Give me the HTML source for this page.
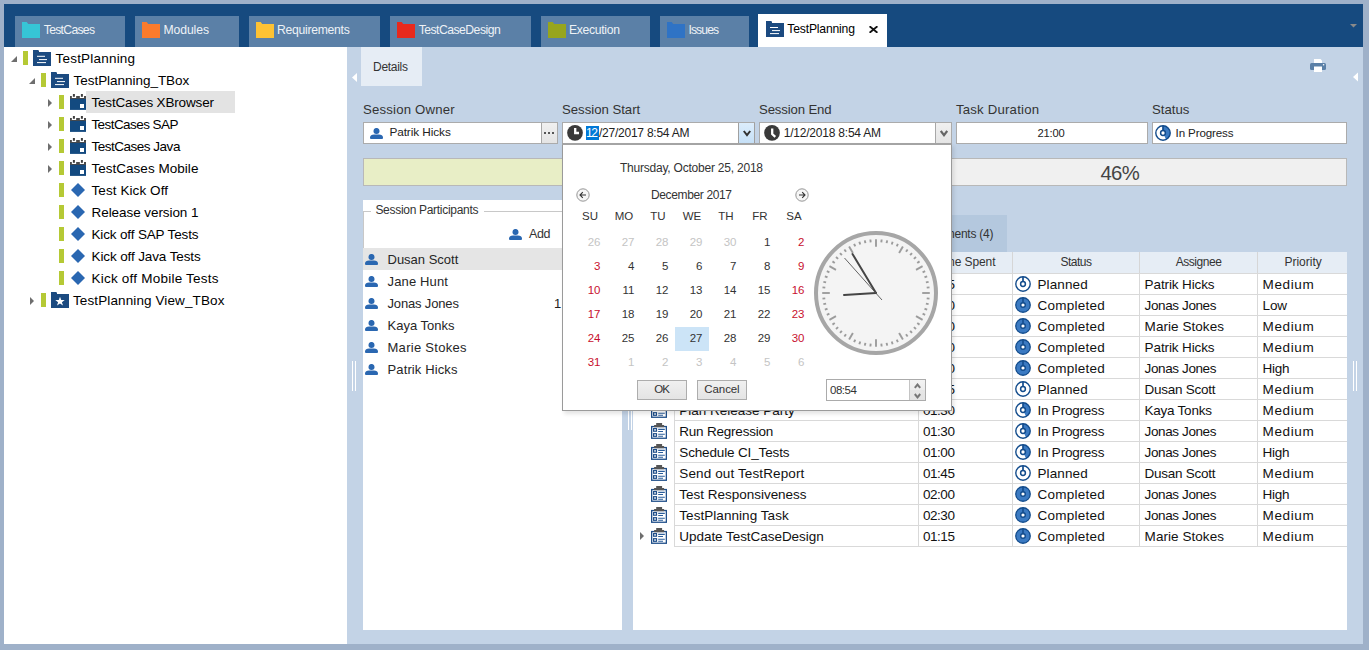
<!DOCTYPE html>
<html><head><meta charset="utf-8"><style>
*{margin:0;padding:0;box-sizing:border-box}
html,body{width:1369px;height:650px;overflow:hidden}
body{background:#9fb1c9;font-family:"Liberation Sans",sans-serif;position:relative;color:#000}
.a{position:absolute}
.t{position:absolute;white-space:pre;line-height:1}
</style></head><body>
<div class="a" style="left:4px;top:4px;width:1359px;height:43px;background:#164a7f"></div>
<div class="a" style="left:15px;top:16px;width:110px;height:31px;background:#5b80a7"></div>
<svg class="a" style="left:22px;top:22px" width="18" height="16" viewBox="0 0 18 16"><path d="M0 0H4.7L6.2 2H18V16H0Z" fill="#36c5d6"/></svg>
<div class="t" style="left:43.80px;top:24.00px;font-size:12.2px;color:#eef2f6;letter-spacing:-0.713px">TestCases</div>
<div class="a" style="left:135px;top:16px;width:104px;height:31px;background:#5b80a7"></div>
<svg class="a" style="left:142px;top:22px" width="18" height="16" viewBox="0 0 18 16"><path d="M0 0H4.7L6.2 2H18V16H0Z" fill="#fb7b2c"/></svg>
<div class="t" style="left:163.50px;top:24.00px;font-size:12.2px;color:#eef2f6;letter-spacing:-0.096px">Modules</div>
<div class="a" style="left:249px;top:16px;width:131px;height:31px;background:#5b80a7"></div>
<svg class="a" style="left:256px;top:22px" width="18" height="16" viewBox="0 0 18 16"><path d="M0 0H4.7L6.2 2H18V16H0Z" fill="#fec233"/></svg>
<div class="t" style="left:277.00px;top:24.00px;font-size:12.2px;color:#eef2f6;letter-spacing:-0.280px">Requirements</div>
<div class="a" style="left:390px;top:16px;width:141px;height:31px;background:#5b80a7"></div>
<svg class="a" style="left:397px;top:22px" width="18" height="16" viewBox="0 0 18 16"><path d="M0 0H4.7L6.2 2H18V16H0Z" fill="#e8291d"/></svg>
<div class="t" style="left:418.70px;top:24.00px;font-size:12.2px;color:#eef2f6;letter-spacing:-0.519px">TestCaseDesign</div>
<div class="a" style="left:541px;top:16px;width:109px;height:31px;background:#5b80a7"></div>
<svg class="a" style="left:548px;top:22px" width="18" height="16" viewBox="0 0 18 16"><path d="M0 0H4.7L6.2 2H18V16H0Z" fill="#97a51d"/></svg>
<div class="t" style="left:569.00px;top:24.00px;font-size:12.2px;color:#eef2f6;letter-spacing:-0.316px">Execution</div>
<div class="a" style="left:660px;top:16px;width:89px;height:31px;background:#5b80a7"></div>
<svg class="a" style="left:667px;top:22px" width="18" height="16" viewBox="0 0 18 16"><path d="M0 0H4.7L6.2 2H18V16H0Z" fill="#2f73c5"/></svg>
<div class="t" style="left:688.40px;top:24.00px;font-size:12.2px;color:#eef2f6;letter-spacing:-0.887px">Issues</div>
<div class="a" style="left:758px;top:14px;width:129px;height:33px;background:#fff"></div>
<svg class="a" style="left:766px;top:21px" width="18" height="16" viewBox="0 0 18 16"><path d="M0 0H5.3L6 1V2H18V16H0Z" fill="#1b4a80"/><path d="M4 6.5H12M6 9.6H14M4 12.6H13" stroke="#fff" stroke-width="1"/></svg>
<div class="t" style="left:787.30px;top:23.00px;font-size:12.2px;color:#000;letter-spacing:-0.191px">TestPlanning</div>
<svg class="a" style="left:869px;top:26px" width="9" height="7" viewBox="0 0 9 7"><path d="M0.6 0.2L8.4 6.8M8.4 0.2L0.6 6.8" stroke="#111" stroke-width="1.8"/></svg>
<svg class="a" style="left:1350px;top:23.5px" width="7" height="4" viewBox="0 0 7 4"><path d="M0 0H7L3.5 3.6Z" fill="#8a8a8a"/></svg>
<div class="a" style="left:4px;top:47px;width:343px;height:597px;background:#fff"></div>
<svg class="a" style="left:11px;top:56px" width="6" height="6" viewBox="0 0 6 6"><path d="M6 0V6H0Z" fill="#6e6e6e"/></svg>
<div class="a" style="left:23px;top:51px;width:5px;height:14px;background:#b5c935"></div>
<svg class="a" style="left:33px;top:50px" width="18" height="16" viewBox="0 0 18 16"><path d="M0 0H5.3L6 1V2H18V16H0Z" fill="#1b4a80"/><path d="M4 6.3H12M6 9.6H14M4 12.6H13" stroke="#fff" stroke-width="1"/></svg>
<div class="t" style="left:55.50px;top:51.80px;font-size:13.5px;color:#000;letter-spacing:0.208px">TestPlanning</div>
<svg class="a" style="left:29px;top:78px" width="6" height="6" viewBox="0 0 6 6"><path d="M6 0V6H0Z" fill="#6e6e6e"/></svg>
<div class="a" style="left:41px;top:73px;width:5px;height:14px;background:#b5c935"></div>
<svg class="a" style="left:51px;top:72px" width="18" height="16" viewBox="0 0 18 16"><path d="M0 0H5.3L6 1V2H18V16H0Z" fill="#1b4a80"/><path d="M4 6.3H12M6 9.6H14M4 12.6H13" stroke="#fff" stroke-width="1"/></svg>
<div class="t" style="left:73.50px;top:73.80px;font-size:13.5px;color:#000;letter-spacing:-0.033px">TestPlanning_TBox</div>
<div class="a" style="left:86px;top:91px;width:149px;height:22px;background:#e3e3e3"></div>
<svg class="a" style="left:48px;top:99px" width="4" height="8" viewBox="0 0 4 8"><path d="M0 0L4 4L0 8Z" fill="#6e6e6e"/></svg>
<div class="a" style="left:59px;top:95px;width:5px;height:14px;background:#b5c935"></div>
<svg class="a" style="left:70px;top:94px" width="16" height="16" viewBox="0 0 16 16"><path d="M0 2H1.85V4H6.15V2H9.85V4H14V2H16V4.9H0Z" fill="#4a4a4a"/><rect x="2.9" y="0" width="2" height="2.8" fill="#3f3f3f"/><rect x="10.9" y="0" width="2" height="2.8" fill="#3f3f3f"/><rect x="0" y="4.9" width="16" height="11" fill="#134a80"/><rect x="10" y="10" width="4" height="4" fill="#fff"/></svg>
<div class="t" style="left:91.40px;top:95.80px;font-size:13.5px;color:#000;letter-spacing:-0.159px">TestCases XBrowser</div>
<svg class="a" style="left:48px;top:121px" width="4" height="8" viewBox="0 0 4 8"><path d="M0 0L4 4L0 8Z" fill="#6e6e6e"/></svg>
<div class="a" style="left:59px;top:117px;width:5px;height:14px;background:#b5c935"></div>
<svg class="a" style="left:70px;top:116px" width="16" height="16" viewBox="0 0 16 16"><path d="M0 2H1.85V4H6.15V2H9.85V4H14V2H16V4.9H0Z" fill="#4a4a4a"/><rect x="2.9" y="0" width="2" height="2.8" fill="#3f3f3f"/><rect x="10.9" y="0" width="2" height="2.8" fill="#3f3f3f"/><rect x="0" y="4.9" width="16" height="11" fill="#134a80"/><rect x="10" y="10" width="4" height="4" fill="#fff"/></svg>
<div class="t" style="left:91.40px;top:117.80px;font-size:13.5px;color:#000;letter-spacing:-0.566px">TestCases SAP</div>
<svg class="a" style="left:48px;top:143px" width="4" height="8" viewBox="0 0 4 8"><path d="M0 0L4 4L0 8Z" fill="#6e6e6e"/></svg>
<div class="a" style="left:59px;top:139px;width:5px;height:14px;background:#b5c935"></div>
<svg class="a" style="left:70px;top:138px" width="16" height="16" viewBox="0 0 16 16"><path d="M0 2H1.85V4H6.15V2H9.85V4H14V2H16V4.9H0Z" fill="#4a4a4a"/><rect x="2.9" y="0" width="2" height="2.8" fill="#3f3f3f"/><rect x="10.9" y="0" width="2" height="2.8" fill="#3f3f3f"/><rect x="0" y="4.9" width="16" height="11" fill="#134a80"/><rect x="10" y="10" width="4" height="4" fill="#fff"/></svg>
<div class="t" style="left:91.40px;top:139.80px;font-size:13.5px;color:#000;letter-spacing:-0.484px">TestCases Java</div>
<svg class="a" style="left:48px;top:165px" width="4" height="8" viewBox="0 0 4 8"><path d="M0 0L4 4L0 8Z" fill="#6e6e6e"/></svg>
<div class="a" style="left:59px;top:161px;width:5px;height:14px;background:#b5c935"></div>
<svg class="a" style="left:70px;top:160px" width="16" height="16" viewBox="0 0 16 16"><path d="M0 2H1.85V4H6.15V2H9.85V4H14V2H16V4.9H0Z" fill="#4a4a4a"/><rect x="2.9" y="0" width="2" height="2.8" fill="#3f3f3f"/><rect x="10.9" y="0" width="2" height="2.8" fill="#3f3f3f"/><rect x="0" y="4.9" width="16" height="11" fill="#134a80"/><rect x="10" y="10" width="4" height="4" fill="#fff"/></svg>
<div class="t" style="left:91.40px;top:161.80px;font-size:13.5px;color:#000;letter-spacing:0.030px">TestCases Mobile</div>
<div class="a" style="left:59px;top:183px;width:5px;height:14px;background:#b5c935"></div>
<svg class="a" style="left:71px;top:183px" width="14" height="14" viewBox="0 0 14 14"><path d="M7 0L14 7L7 14L0 7Z" fill="#2a67b1"/></svg>
<div class="t" style="left:91.50px;top:183.80px;font-size:13.5px;color:#000;letter-spacing:0.081px">Test Kick Off</div>
<div class="a" style="left:59px;top:205px;width:5px;height:14px;background:#b5c935"></div>
<svg class="a" style="left:71px;top:205px" width="14" height="14" viewBox="0 0 14 14"><path d="M7 0L14 7L7 14L0 7Z" fill="#2a67b1"/></svg>
<div class="t" style="left:91.50px;top:205.80px;font-size:13.5px;color:#000;letter-spacing:-0.066px">Release version 1</div>
<div class="a" style="left:59px;top:227px;width:5px;height:14px;background:#b5c935"></div>
<svg class="a" style="left:71px;top:227px" width="14" height="14" viewBox="0 0 14 14"><path d="M7 0L14 7L7 14L0 7Z" fill="#2a67b1"/></svg>
<div class="t" style="left:91.50px;top:227.80px;font-size:13.5px;color:#000;letter-spacing:-0.151px">Kick off SAP Tests</div>
<div class="a" style="left:59px;top:249px;width:5px;height:14px;background:#b5c935"></div>
<svg class="a" style="left:71px;top:249px" width="14" height="14" viewBox="0 0 14 14"><path d="M7 0L14 7L7 14L0 7Z" fill="#2a67b1"/></svg>
<div class="t" style="left:91.50px;top:249.80px;font-size:13.5px;color:#000;letter-spacing:-0.117px">Kick off Java Tests</div>
<div class="a" style="left:59px;top:271px;width:5px;height:14px;background:#b5c935"></div>
<svg class="a" style="left:71px;top:271px" width="14" height="14" viewBox="0 0 14 14"><path d="M7 0L14 7L7 14L0 7Z" fill="#2a67b1"/></svg>
<div class="t" style="left:91.50px;top:271.80px;font-size:13.5px;color:#000;letter-spacing:0.222px">Kick off Mobile Tests</div>
<svg class="a" style="left:30px;top:297px" width="4" height="8" viewBox="0 0 4 8"><path d="M0 0L4 4L0 8Z" fill="#6e6e6e"/></svg>
<div class="a" style="left:41px;top:293px;width:5px;height:14px;background:#b5c935"></div>
<svg class="a" style="left:51px;top:292px" width="18" height="16" viewBox="0 0 18 16"><path d="M0 0H5.3L6 1V2H18V16H0Z" fill="#1b4a80"/><path d="M9 5.2L10.1 8.2H13.2L10.7 10.1L11.7 13.1L9 11.3L6.3 13.1L7.3 10.1L4.8 8.2H7.9Z" fill="#fff" transform="translate(9 9.3) scale(1.12) translate(-9 -9.3)"/></svg>
<div class="t" style="left:73.00px;top:293.80px;font-size:13.5px;color:#000;letter-spacing:0.110px">TestPlanning View_TBox</div>
<div class="a" style="left:347px;top:47px;width:1016px;height:597px;background:#c3d3e6"></div>
<div class="a" style="left:361px;top:47px;width:61px;height:39px;background:#e6edf5"></div>
<div class="t" style="left:373.00px;top:61.30px;font-size:12px;color:#333;letter-spacing:-0.281px">Details</div>
<svg class="a" style="left:352px;top:73px" width="5" height="9" viewBox="0 0 5 9"><path d="M5 0V9L0 4.5Z" fill="#fff"/></svg>
<svg class="a" style="left:1310px;top:59px" width="16" height="13" viewBox="0 0 16 13"><path d="M4 0H10.5L12 1.5V4.5H4Z" fill="#fff"/><rect x="0" y="4" width="16" height="7" rx="1.5" fill="#5b80a7"/><rect x="4" y="7.5" width="8" height="5.5" fill="#fff"/><circle cx="13.6" cy="5.8" r="0.8" fill="#fff"/></svg>
<svg class="a" style="left:1353px;top:72px" width="5" height="10" viewBox="0 0 5 9"><path d="M5 0V9L0 4.5Z" fill="#fff"/></svg>
<div class="t" style="left:363.00px;top:103.30px;font-size:13.2px;color:#333;letter-spacing:0.182px">Session Owner</div>
<div class="t" style="left:562.00px;top:103.30px;font-size:13.2px;color:#333;letter-spacing:-0.020px">Session Start</div>
<div class="t" style="left:759.00px;top:103.30px;font-size:13.2px;color:#333;letter-spacing:-0.145px">Session End</div>
<div class="t" style="left:956.00px;top:103.30px;font-size:13.2px;color:#333;letter-spacing:0.198px">Task Duration</div>
<div class="t" style="left:1152.00px;top:103.30px;font-size:13.2px;color:#333;letter-spacing:-0.018px">Status</div>
<div class="a" style="left:363px;top:122px;width:195px;height:22px;background:#fff;border:1px solid #ababab"></div>
<svg class="a" style="left:370px;top:127.5px" width="13" height="11" viewBox="0 0 13 11"><circle cx="6.5" cy="3" r="3.05" fill="#2a67b1"/><path d="M0 9.6C0 7.6 1.8 6.6 4 6.6H9C11.2 6.6 13 7.6 13 9.6V10Q13 11 12 11H1Q0 11 0 10Z" fill="#2a67b1"/></svg>
<div class="t" style="left:389.40px;top:127.10px;font-size:11.8px;color:#222;letter-spacing:-0.080px">Patrik Hicks</div>
<div class="a" style="left:541px;top:123px;width:16px;height:20px;background:linear-gradient(#f0f0f0,#e4e4e4);border-left:1px solid #a8a8a8"></div>
<svg class="a" style="left:543px;top:132px" width="12" height="2" viewBox="0 0 12 2"><rect x="1" y="0" width="2" height="2" fill="#555"/><rect x="5" y="0" width="2" height="2" fill="#555"/><rect x="9" y="0" width="2" height="2" fill="#555"/></svg>
<div class="a" style="left:562px;top:122px;width:193px;height:22px;background:#fff;border:1px solid #ababab"></div>
<svg class="a" style="left:567px;top:125px" width="16" height="16" viewBox="0 0 16 16"><circle cx="8" cy="7.85" r="7.85" fill="#3a3a3a"/><path d="M8.2 3.1V8H12" stroke="#fff" stroke-width="2.3" fill="none"/></svg>
<div class="a" style="left:586px;top:126px;width:13px;height:14px;background:#0078d7"></div>
<div class="t" style="left:586.00px;top:127.00px;font-size:12px;color:#fff;letter-spacing:-1.359px">12</div>
<div class="t" style="left:599.00px;top:127.00px;font-size:12px;color:#222;letter-spacing:-0.239px">/27/2017 8:54 AM</div>
<div class="a" style="left:738px;top:123px;width:17px;height:20px;background:linear-gradient(#dcedfc,#c6e0f7);border-left:1px solid #a0a0a0;border-right:1px solid #a0a0a0"></div>
<svg class="a" style="left:742.5px;top:129.5px" width="8" height="7" viewBox="0 0 8 7"><path d="M0.8 1L4 5.2L7.2 1" stroke="#333" stroke-width="2" fill="none"/></svg>
<div class="a" style="left:759px;top:122px;width:193px;height:22px;background:#fff;border:1px solid #ababab"></div>
<svg class="a" style="left:764px;top:125px" width="16" height="16" viewBox="0 0 16 16"><circle cx="8" cy="7.85" r="7.85" fill="#3a3a3a"/><path d="M8.2 3.4V9L11.3 11.8" stroke="#fff" stroke-width="2.3" fill="none"/></svg>
<div class="t" style="left:783.70px;top:127.00px;font-size:12px;color:#222;letter-spacing:-0.209px">1/12/2018 8:54 AM</div>
<div class="a" style="left:935px;top:123px;width:16px;height:20px;background:linear-gradient(#f0f0f0,#e5e5e5);border-left:1px solid #a8a8a8"></div>
<svg class="a" style="left:939.5px;top:129.5px" width="8" height="7" viewBox="0 0 8 7"><path d="M0.8 1L4 5.2L7.2 1" stroke="#666" stroke-width="2.2" fill="none"/></svg>
<div class="a" style="left:956px;top:122px;width:192px;height:22px;background:#fff;border:1px solid #ababab"></div>
<div class="t" style="left:1037.50px;top:128.00px;font-size:11.2px;color:#222;letter-spacing:-0.175px">21:00</div>
<div class="a" style="left:1152px;top:122px;width:195px;height:22px;background:#fff;border:1px solid #ababab"></div>
<svg class="a" style="left:1155px;top:125px" width="16" height="16" viewBox="0 0 16 16"><circle cx="8" cy="8" r="7.2" fill="#fff"/><path d="M8 8V0.8A7.2 7.2 0 0 1 11.04 14.53Z" fill="#3b7ac2"/><circle cx="8" cy="8" r="7.2" fill="none" stroke="#134c8c" stroke-width="1.4"/><circle cx="8" cy="8" r="2.4" fill="#fff" stroke="#134c8c" stroke-width="1.5"/><path d="M8 0.8V5.6" stroke="#134c8c" stroke-width="1.7"/></svg>
<div class="t" style="left:1175.60px;top:127.00px;font-size:11.6px;color:#222;letter-spacing:-0.130px">In Progress</div>
<div class="a" style="left:363px;top:158px;width:984px;height:28px;background:#f0f0f0;border:1px solid #b8b8b8"></div>
<div class="a" style="left:364px;top:159px;width:452px;height:26px;background:#e8eec6"></div>
<div class="t" style="left:1100.40px;top:163.00px;font-size:20.3px;color:#444;letter-spacing:-0.547px">46%</div>
<div class="a" style="left:363px;top:200px;width:259px;height:430px;background:#fff"></div>
<div class="a" style="left:363px;top:211px;width:8px;height:1px;background:#c8c8c8"></div>
<div class="a" style="left:363px;top:211px;width:1px;height:37px;background:#c8c8c8"></div>
<div class="a" style="left:484px;top:211px;width:138px;height:1px;background:#c8c8c8"></div>
<div class="t" style="left:375.40px;top:204.20px;font-size:12px;color:#333;letter-spacing:-0.297px">Session Participants</div>
<svg class="a" style="left:509px;top:228.5px" width="13" height="11" viewBox="0 0 13 11"><circle cx="6.5" cy="3" r="3.05" fill="#2a67b1"/><path d="M0 9.6C0 7.6 1.8 6.6 4 6.6H9C11.2 6.6 13 7.6 13 9.6V10Q13 11 12 11H1Q0 11 0 10Z" fill="#2a67b1"/></svg>
<div class="t" style="left:529.00px;top:228.00px;font-size:12.5px;color:#333;letter-spacing:-0.375px">Add</div>
<div class="a" style="left:363px;top:248px;width:259px;height:22px;background:#e5e5e5"></div>
<svg class="a" style="left:365px;top:253.5px" width="13" height="11" viewBox="0 0 13 11"><circle cx="6.5" cy="3" r="3.05" fill="#2a67b1"/><path d="M0 9.6C0 7.6 1.8 6.6 4 6.6H9C11.2 6.6 13 7.6 13 9.6V10Q13 11 12 11H1Q0 11 0 10Z" fill="#2a67b1"/></svg>
<div class="t" style="left:387.50px;top:252.60px;font-size:13px;color:#262626">Dusan Scott</div>
<svg class="a" style="left:365px;top:275.5px" width="13" height="11" viewBox="0 0 13 11"><circle cx="6.5" cy="3" r="3.05" fill="#2a67b1"/><path d="M0 9.6C0 7.6 1.8 6.6 4 6.6H9C11.2 6.6 13 7.6 13 9.6V10Q13 11 12 11H1Q0 11 0 10Z" fill="#2a67b1"/></svg>
<div class="t" style="left:387.50px;top:274.60px;font-size:13px;color:#262626;letter-spacing:0.142px">Jane Hunt</div>
<svg class="a" style="left:365px;top:297.5px" width="13" height="11" viewBox="0 0 13 11"><circle cx="6.5" cy="3" r="3.05" fill="#2a67b1"/><path d="M0 9.6C0 7.6 1.8 6.6 4 6.6H9C11.2 6.6 13 7.6 13 9.6V10Q13 11 12 11H1Q0 11 0 10Z" fill="#2a67b1"/></svg>
<div class="t" style="left:387.50px;top:296.60px;font-size:13px;color:#262626;letter-spacing:-0.160px">Jonas Jones</div>
<svg class="a" style="left:365px;top:319.5px" width="13" height="11" viewBox="0 0 13 11"><circle cx="6.5" cy="3" r="3.05" fill="#2a67b1"/><path d="M0 9.6C0 7.6 1.8 6.6 4 6.6H9C11.2 6.6 13 7.6 13 9.6V10Q13 11 12 11H1Q0 11 0 10Z" fill="#2a67b1"/></svg>
<div class="t" style="left:387.50px;top:318.60px;font-size:13px;color:#262626">Kaya Tonks</div>
<svg class="a" style="left:365px;top:341.5px" width="13" height="11" viewBox="0 0 13 11"><circle cx="6.5" cy="3" r="3.05" fill="#2a67b1"/><path d="M0 9.6C0 7.6 1.8 6.6 4 6.6H9C11.2 6.6 13 7.6 13 9.6V10Q13 11 12 11H1Q0 11 0 10Z" fill="#2a67b1"/></svg>
<div class="t" style="left:387.50px;top:340.60px;font-size:13px;color:#262626;letter-spacing:0.284px">Marie Stokes</div>
<svg class="a" style="left:365px;top:363.5px" width="13" height="11" viewBox="0 0 13 11"><circle cx="6.5" cy="3" r="3.05" fill="#2a67b1"/><path d="M0 9.6C0 7.6 1.8 6.6 4 6.6H9C11.2 6.6 13 7.6 13 9.6V10Q13 11 12 11H1Q0 11 0 10Z" fill="#2a67b1"/></svg>
<div class="t" style="left:387.50px;top:362.60px;font-size:13px;color:#262626;letter-spacing:0.125px">Patrik Hicks</div>
<div class="t" style="left:554.00px;top:297.00px;font-size:13px;color:#222">1</div>
<div class="a" style="left:352px;top:361px;width:1px;height:30px;background:#fff"></div>
<div class="a" style="left:355px;top:361px;width:1px;height:30px;background:#fff"></div>
<div class="a" style="left:628px;top:400px;width:1px;height:30px;background:#fff"></div>
<div class="a" style="left:631px;top:400px;width:1px;height:30px;background:#fff"></div>
<div class="a" style="left:1353px;top:361px;width:1px;height:30px;background:#fff"></div>
<div class="a" style="left:1356px;top:361px;width:1px;height:30px;background:#fff"></div>
<div class="a" style="left:900px;top:215px;width:107px;height:37px;background:#b4c8de"></div>
<div class="t" style="left:912.40px;top:227.90px;font-size:12px;color:#333;letter-spacing:-0.265px">Attachments (4)</div>
<div class="a" style="left:633px;top:252px;width:714px;height:378px;background:#fff"></div>
<div class="a" style="left:633px;top:252px;width:714px;height:22px;background:#e6edf5;border-bottom:1px solid #d4d4d4"></div>
<div class="a" style="left:674px;top:252px;width:1px;height:21px;background:#d6d6d6"></div>
<div class="a" style="left:918px;top:252px;width:1px;height:21px;background:#d6d6d6"></div>
<div class="a" style="left:1012px;top:252px;width:1px;height:21px;background:#d6d6d6"></div>
<div class="a" style="left:1139px;top:252px;width:1px;height:21px;background:#d6d6d6"></div>
<div class="a" style="left:1257px;top:252px;width:1px;height:21px;background:#d6d6d6"></div>
<div class="t" style="left:935.50px;top:256.10px;font-size:12px;color:#333;letter-spacing:-0.102px">Time Spent</div>
<div class="t" style="left:1060.40px;top:256.10px;font-size:12px;color:#333;letter-spacing:-0.486px">Status</div>
<div class="t" style="left:1175.70px;top:256.10px;font-size:12px;color:#333;letter-spacing:-0.454px">Assignee</div>
<div class="t" style="left:1284.50px;top:256.10px;font-size:12px;color:#333;letter-spacing:-0.021px">Priority</div>
<div class="a" style="left:674px;top:273px;width:673px;height:22px;border:1px solid #d9d9d9;border-right:none"></div>
<div class="a" style="left:918px;top:273px;width:1px;height:22px;background:#d9d9d9"></div>
<div class="a" style="left:1012px;top:273px;width:1px;height:22px;background:#d9d9d9"></div>
<div class="a" style="left:1139px;top:273px;width:1px;height:22px;background:#d9d9d9"></div>
<div class="a" style="left:1257px;top:273px;width:1px;height:22px;background:#d9d9d9"></div>
<svg class="a" style="left:651px;top:276px" width="16" height="16" viewBox="0 0 16 16"><rect x="0.65" y="3.55" width="14.7" height="11.7" fill="#fff" stroke="#1f4e89" stroke-width="1.3"/><rect x="5.2" y="0" width="5.9" height="2.2" fill="#555"/><rect x="3.1" y="2" width="10" height="2.2" fill="#555"/><rect x="2.6" y="5.6" width="2.9" height="2.6" fill="none" stroke="#1f4e89" stroke-width="1.2"/><rect x="2.6" y="10.7" width="2.9" height="2.6" fill="none" stroke="#1f4e89" stroke-width="1.2"/><path d="M7.2 6.4H13.8M7.2 8.5H12M7.2 11.2H13.8M7.2 13.3H12" stroke="#2a5d9a" stroke-width="1.1"/></svg>
<div class="t" style="left:679.30px;top:278.00px;font-size:13.5px;color:#111">Define Test Scope</div>
<div class="t" style="left:923.00px;top:278.00px;font-size:13.5px;color:#111;letter-spacing:-0.474px">01:15</div>
<svg class="a" style="left:1015px;top:276px" width="16" height="16" viewBox="0 0 16 16"><circle cx="8" cy="8" r="7.2" fill="#fff" stroke="#134c8c" stroke-width="1.4"/><circle cx="8" cy="8" r="2.4" fill="#fff" stroke="#134c8c" stroke-width="1.5"/><path d="M8 0.8V5.6" stroke="#134c8c" stroke-width="1.7"/></svg>
<div class="t" style="left:1037.50px;top:278.00px;font-size:13.5px;color:#111;letter-spacing:0.109px">Planned</div>
<div class="t" style="left:1144.60px;top:278.00px;font-size:13.5px;color:#111;letter-spacing:-0.115px">Patrik Hicks</div>
<div class="t" style="left:1262.60px;top:278.00px;font-size:13.5px;color:#111;letter-spacing:0.617px">Medium</div>
<div class="a" style="left:674px;top:294px;width:673px;height:22px;border:1px solid #d9d9d9;border-right:none"></div>
<div class="a" style="left:918px;top:294px;width:1px;height:22px;background:#d9d9d9"></div>
<div class="a" style="left:1012px;top:294px;width:1px;height:22px;background:#d9d9d9"></div>
<div class="a" style="left:1139px;top:294px;width:1px;height:22px;background:#d9d9d9"></div>
<div class="a" style="left:1257px;top:294px;width:1px;height:22px;background:#d9d9d9"></div>
<svg class="a" style="left:651px;top:297px" width="16" height="16" viewBox="0 0 16 16"><rect x="0.65" y="3.55" width="14.7" height="11.7" fill="#fff" stroke="#1f4e89" stroke-width="1.3"/><rect x="5.2" y="0" width="5.9" height="2.2" fill="#555"/><rect x="3.1" y="2" width="10" height="2.2" fill="#555"/><rect x="2.6" y="5.6" width="2.9" height="2.6" fill="none" stroke="#1f4e89" stroke-width="1.2"/><rect x="2.6" y="10.7" width="2.9" height="2.6" fill="none" stroke="#1f4e89" stroke-width="1.2"/><path d="M7.2 6.4H13.8M7.2 8.5H12M7.2 11.2H13.8M7.2 13.3H12" stroke="#2a5d9a" stroke-width="1.1"/></svg>
<div class="t" style="left:679.30px;top:299.00px;font-size:13.5px;color:#111">Create Test Plan</div>
<div class="t" style="left:923.00px;top:299.00px;font-size:13.5px;color:#111;letter-spacing:-0.474px">02:00</div>
<svg class="a" style="left:1015px;top:297px" width="16" height="16" viewBox="0 0 16 16"><circle cx="8" cy="8" r="7.25" fill="#3b7ac2" stroke="#134c8c" stroke-width="1.3"/><circle cx="8" cy="8" r="2.3" fill="#fff" stroke="#134c8c" stroke-width="1.4"/><path d="M8 0.8V5.7" stroke="#134c8c" stroke-width="1.6"/></svg>
<div class="t" style="left:1037.50px;top:299.00px;font-size:13.5px;color:#111;letter-spacing:0.250px">Completed</div>
<div class="t" style="left:1144.60px;top:299.00px;font-size:13.5px;color:#111;letter-spacing:-0.391px">Jonas Jones</div>
<div class="t" style="left:1262.60px;top:299.00px;font-size:13.5px;color:#111;letter-spacing:-0.133px">Low</div>
<div class="a" style="left:674px;top:315px;width:673px;height:22px;border:1px solid #d9d9d9;border-right:none"></div>
<div class="a" style="left:918px;top:315px;width:1px;height:22px;background:#d9d9d9"></div>
<div class="a" style="left:1012px;top:315px;width:1px;height:22px;background:#d9d9d9"></div>
<div class="a" style="left:1139px;top:315px;width:1px;height:22px;background:#d9d9d9"></div>
<div class="a" style="left:1257px;top:315px;width:1px;height:22px;background:#d9d9d9"></div>
<svg class="a" style="left:651px;top:318px" width="16" height="16" viewBox="0 0 16 16"><rect x="0.65" y="3.55" width="14.7" height="11.7" fill="#fff" stroke="#1f4e89" stroke-width="1.3"/><rect x="5.2" y="0" width="5.9" height="2.2" fill="#555"/><rect x="3.1" y="2" width="10" height="2.2" fill="#555"/><rect x="2.6" y="5.6" width="2.9" height="2.6" fill="none" stroke="#1f4e89" stroke-width="1.2"/><rect x="2.6" y="10.7" width="2.9" height="2.6" fill="none" stroke="#1f4e89" stroke-width="1.2"/><path d="M7.2 6.4H13.8M7.2 8.5H12M7.2 11.2H13.8M7.2 13.3H12" stroke="#2a5d9a" stroke-width="1.1"/></svg>
<div class="t" style="left:679.30px;top:320.00px;font-size:13.5px;color:#111">Review Requirements</div>
<div class="t" style="left:923.00px;top:320.00px;font-size:13.5px;color:#111;letter-spacing:-0.474px">01:00</div>
<svg class="a" style="left:1015px;top:318px" width="16" height="16" viewBox="0 0 16 16"><circle cx="8" cy="8" r="7.25" fill="#3b7ac2" stroke="#134c8c" stroke-width="1.3"/><circle cx="8" cy="8" r="2.3" fill="#fff" stroke="#134c8c" stroke-width="1.4"/><path d="M8 0.8V5.7" stroke="#134c8c" stroke-width="1.6"/></svg>
<div class="t" style="left:1037.50px;top:320.00px;font-size:13.5px;color:#111;letter-spacing:0.250px">Completed</div>
<div class="t" style="left:1144.60px;top:320.00px;font-size:13.5px;color:#111;letter-spacing:0.056px">Marie Stokes</div>
<div class="t" style="left:1262.60px;top:320.00px;font-size:13.5px;color:#111;letter-spacing:0.617px">Medium</div>
<div class="a" style="left:674px;top:336px;width:673px;height:22px;border:1px solid #d9d9d9;border-right:none"></div>
<div class="a" style="left:918px;top:336px;width:1px;height:22px;background:#d9d9d9"></div>
<div class="a" style="left:1012px;top:336px;width:1px;height:22px;background:#d9d9d9"></div>
<div class="a" style="left:1139px;top:336px;width:1px;height:22px;background:#d9d9d9"></div>
<div class="a" style="left:1257px;top:336px;width:1px;height:22px;background:#d9d9d9"></div>
<svg class="a" style="left:651px;top:339px" width="16" height="16" viewBox="0 0 16 16"><rect x="0.65" y="3.55" width="14.7" height="11.7" fill="#fff" stroke="#1f4e89" stroke-width="1.3"/><rect x="5.2" y="0" width="5.9" height="2.2" fill="#555"/><rect x="3.1" y="2" width="10" height="2.2" fill="#555"/><rect x="2.6" y="5.6" width="2.9" height="2.6" fill="none" stroke="#1f4e89" stroke-width="1.2"/><rect x="2.6" y="10.7" width="2.9" height="2.6" fill="none" stroke="#1f4e89" stroke-width="1.2"/><path d="M7.2 6.4H13.8M7.2 8.5H12M7.2 11.2H13.8M7.2 13.3H12" stroke="#2a5d9a" stroke-width="1.1"/></svg>
<div class="t" style="left:679.30px;top:341.00px;font-size:13.5px;color:#111">Setup Environment</div>
<div class="t" style="left:923.00px;top:341.00px;font-size:13.5px;color:#111;letter-spacing:-0.474px">03:00</div>
<svg class="a" style="left:1015px;top:339px" width="16" height="16" viewBox="0 0 16 16"><circle cx="8" cy="8" r="7.25" fill="#3b7ac2" stroke="#134c8c" stroke-width="1.3"/><circle cx="8" cy="8" r="2.3" fill="#fff" stroke="#134c8c" stroke-width="1.4"/><path d="M8 0.8V5.7" stroke="#134c8c" stroke-width="1.6"/></svg>
<div class="t" style="left:1037.50px;top:341.00px;font-size:13.5px;color:#111;letter-spacing:0.250px">Completed</div>
<div class="t" style="left:1144.60px;top:341.00px;font-size:13.5px;color:#111;letter-spacing:-0.115px">Patrik Hicks</div>
<div class="t" style="left:1262.60px;top:341.00px;font-size:13.5px;color:#111;letter-spacing:0.617px">Medium</div>
<div class="a" style="left:674px;top:357px;width:673px;height:22px;border:1px solid #d9d9d9;border-right:none"></div>
<div class="a" style="left:918px;top:357px;width:1px;height:22px;background:#d9d9d9"></div>
<div class="a" style="left:1012px;top:357px;width:1px;height:22px;background:#d9d9d9"></div>
<div class="a" style="left:1139px;top:357px;width:1px;height:22px;background:#d9d9d9"></div>
<div class="a" style="left:1257px;top:357px;width:1px;height:22px;background:#d9d9d9"></div>
<svg class="a" style="left:651px;top:360px" width="16" height="16" viewBox="0 0 16 16"><rect x="0.65" y="3.55" width="14.7" height="11.7" fill="#fff" stroke="#1f4e89" stroke-width="1.3"/><rect x="5.2" y="0" width="5.9" height="2.2" fill="#555"/><rect x="3.1" y="2" width="10" height="2.2" fill="#555"/><rect x="2.6" y="5.6" width="2.9" height="2.6" fill="none" stroke="#1f4e89" stroke-width="1.2"/><rect x="2.6" y="10.7" width="2.9" height="2.6" fill="none" stroke="#1f4e89" stroke-width="1.2"/><path d="M7.2 6.4H13.8M7.2 8.5H12M7.2 11.2H13.8M7.2 13.3H12" stroke="#2a5d9a" stroke-width="1.1"/></svg>
<div class="t" style="left:679.30px;top:362.00px;font-size:13.5px;color:#111">Prepare Test Data</div>
<div class="t" style="left:923.00px;top:362.00px;font-size:13.5px;color:#111;letter-spacing:-0.474px">01:30</div>
<svg class="a" style="left:1015px;top:360px" width="16" height="16" viewBox="0 0 16 16"><circle cx="8" cy="8" r="7.25" fill="#3b7ac2" stroke="#134c8c" stroke-width="1.3"/><circle cx="8" cy="8" r="2.3" fill="#fff" stroke="#134c8c" stroke-width="1.4"/><path d="M8 0.8V5.7" stroke="#134c8c" stroke-width="1.6"/></svg>
<div class="t" style="left:1037.50px;top:362.00px;font-size:13.5px;color:#111;letter-spacing:0.250px">Completed</div>
<div class="t" style="left:1144.60px;top:362.00px;font-size:13.5px;color:#111;letter-spacing:-0.391px">Jonas Jones</div>
<div class="t" style="left:1262.60px;top:362.00px;font-size:13.5px;color:#111;letter-spacing:-0.289px">High</div>
<div class="a" style="left:674px;top:378px;width:673px;height:22px;border:1px solid #d9d9d9;border-right:none"></div>
<div class="a" style="left:918px;top:378px;width:1px;height:22px;background:#d9d9d9"></div>
<div class="a" style="left:1012px;top:378px;width:1px;height:22px;background:#d9d9d9"></div>
<div class="a" style="left:1139px;top:378px;width:1px;height:22px;background:#d9d9d9"></div>
<div class="a" style="left:1257px;top:378px;width:1px;height:22px;background:#d9d9d9"></div>
<svg class="a" style="left:651px;top:381px" width="16" height="16" viewBox="0 0 16 16"><rect x="0.65" y="3.55" width="14.7" height="11.7" fill="#fff" stroke="#1f4e89" stroke-width="1.3"/><rect x="5.2" y="0" width="5.9" height="2.2" fill="#555"/><rect x="3.1" y="2" width="10" height="2.2" fill="#555"/><rect x="2.6" y="5.6" width="2.9" height="2.6" fill="none" stroke="#1f4e89" stroke-width="1.2"/><rect x="2.6" y="10.7" width="2.9" height="2.6" fill="none" stroke="#1f4e89" stroke-width="1.2"/><path d="M7.2 6.4H13.8M7.2 8.5H12M7.2 11.2H13.8M7.2 13.3H12" stroke="#2a5d9a" stroke-width="1.1"/></svg>
<div class="t" style="left:679.30px;top:383.00px;font-size:13.5px;color:#111">Kick off Meeting</div>
<div class="t" style="left:923.00px;top:383.00px;font-size:13.5px;color:#111;letter-spacing:-0.474px">00:45</div>
<svg class="a" style="left:1015px;top:381px" width="16" height="16" viewBox="0 0 16 16"><circle cx="8" cy="8" r="7.2" fill="#fff" stroke="#134c8c" stroke-width="1.4"/><circle cx="8" cy="8" r="2.4" fill="#fff" stroke="#134c8c" stroke-width="1.5"/><path d="M8 0.8V5.6" stroke="#134c8c" stroke-width="1.7"/></svg>
<div class="t" style="left:1037.50px;top:383.00px;font-size:13.5px;color:#111;letter-spacing:0.109px">Planned</div>
<div class="t" style="left:1144.60px;top:383.00px;font-size:13.5px;color:#111;letter-spacing:-0.255px">Dusan Scott</div>
<div class="t" style="left:1262.60px;top:383.00px;font-size:13.5px;color:#111;letter-spacing:0.617px">Medium</div>
<div class="a" style="left:674px;top:399px;width:673px;height:22px;border:1px solid #d9d9d9;border-right:none"></div>
<div class="a" style="left:918px;top:399px;width:1px;height:22px;background:#d9d9d9"></div>
<div class="a" style="left:1012px;top:399px;width:1px;height:22px;background:#d9d9d9"></div>
<div class="a" style="left:1139px;top:399px;width:1px;height:22px;background:#d9d9d9"></div>
<div class="a" style="left:1257px;top:399px;width:1px;height:22px;background:#d9d9d9"></div>
<svg class="a" style="left:651px;top:402px" width="16" height="16" viewBox="0 0 16 16"><rect x="0.65" y="3.55" width="14.7" height="11.7" fill="#fff" stroke="#1f4e89" stroke-width="1.3"/><rect x="5.2" y="0" width="5.9" height="2.2" fill="#555"/><rect x="3.1" y="2" width="10" height="2.2" fill="#555"/><rect x="2.6" y="5.6" width="2.9" height="2.6" fill="none" stroke="#1f4e89" stroke-width="1.2"/><rect x="2.6" y="10.7" width="2.9" height="2.6" fill="none" stroke="#1f4e89" stroke-width="1.2"/><path d="M7.2 6.4H13.8M7.2 8.5H12M7.2 11.2H13.8M7.2 13.3H12" stroke="#2a5d9a" stroke-width="1.1"/></svg>
<div class="t" style="left:679.30px;top:404.00px;font-size:13.5px;color:#111">Plan Release Party</div>
<div class="t" style="left:923.00px;top:404.00px;font-size:13.5px;color:#111;letter-spacing:-0.474px">01:30</div>
<svg class="a" style="left:1015px;top:402px" width="16" height="16" viewBox="0 0 16 16"><circle cx="8" cy="8" r="7.2" fill="#fff"/><path d="M8 8V0.8A7.2 7.2 0 0 1 11.04 14.53Z" fill="#3b7ac2"/><circle cx="8" cy="8" r="7.2" fill="none" stroke="#134c8c" stroke-width="1.4"/><circle cx="8" cy="8" r="2.4" fill="#fff" stroke="#134c8c" stroke-width="1.5"/><path d="M8 0.8V5.6" stroke="#134c8c" stroke-width="1.7"/></svg>
<div class="t" style="left:1037.50px;top:404.00px;font-size:13.5px;color:#111;letter-spacing:-0.213px">In Progress</div>
<div class="t" style="left:1144.60px;top:404.00px;font-size:13.5px;color:#111;letter-spacing:-0.250px">Kaya Tonks</div>
<div class="t" style="left:1262.60px;top:404.00px;font-size:13.5px;color:#111;letter-spacing:0.617px">Medium</div>
<div class="a" style="left:674px;top:420px;width:673px;height:22px;border:1px solid #d9d9d9;border-right:none"></div>
<div class="a" style="left:918px;top:420px;width:1px;height:22px;background:#d9d9d9"></div>
<div class="a" style="left:1012px;top:420px;width:1px;height:22px;background:#d9d9d9"></div>
<div class="a" style="left:1139px;top:420px;width:1px;height:22px;background:#d9d9d9"></div>
<div class="a" style="left:1257px;top:420px;width:1px;height:22px;background:#d9d9d9"></div>
<svg class="a" style="left:651px;top:423px" width="16" height="16" viewBox="0 0 16 16"><rect x="0.65" y="3.55" width="14.7" height="11.7" fill="#fff" stroke="#1f4e89" stroke-width="1.3"/><rect x="5.2" y="0" width="5.9" height="2.2" fill="#555"/><rect x="3.1" y="2" width="10" height="2.2" fill="#555"/><rect x="2.6" y="5.6" width="2.9" height="2.6" fill="none" stroke="#1f4e89" stroke-width="1.2"/><rect x="2.6" y="10.7" width="2.9" height="2.6" fill="none" stroke="#1f4e89" stroke-width="1.2"/><path d="M7.2 6.4H13.8M7.2 8.5H12M7.2 11.2H13.8M7.2 13.3H12" stroke="#2a5d9a" stroke-width="1.1"/></svg>
<div class="t" style="left:679.30px;top:425.00px;font-size:13.5px;color:#111;letter-spacing:-0.216px">Run Regression</div>
<div class="t" style="left:923.00px;top:425.00px;font-size:13.5px;color:#111;letter-spacing:-0.474px">01:30</div>
<svg class="a" style="left:1015px;top:423px" width="16" height="16" viewBox="0 0 16 16"><circle cx="8" cy="8" r="7.2" fill="#fff"/><path d="M8 8V0.8A7.2 7.2 0 0 1 11.04 14.53Z" fill="#3b7ac2"/><circle cx="8" cy="8" r="7.2" fill="none" stroke="#134c8c" stroke-width="1.4"/><circle cx="8" cy="8" r="2.4" fill="#fff" stroke="#134c8c" stroke-width="1.5"/><path d="M8 0.8V5.6" stroke="#134c8c" stroke-width="1.7"/></svg>
<div class="t" style="left:1037.50px;top:425.00px;font-size:13.5px;color:#111;letter-spacing:-0.213px">In Progress</div>
<div class="t" style="left:1144.60px;top:425.00px;font-size:13.5px;color:#111;letter-spacing:-0.391px">Jonas Jones</div>
<div class="t" style="left:1262.60px;top:425.00px;font-size:13.5px;color:#111;letter-spacing:0.617px">Medium</div>
<div class="a" style="left:674px;top:441px;width:673px;height:22px;border:1px solid #d9d9d9;border-right:none"></div>
<div class="a" style="left:918px;top:441px;width:1px;height:22px;background:#d9d9d9"></div>
<div class="a" style="left:1012px;top:441px;width:1px;height:22px;background:#d9d9d9"></div>
<div class="a" style="left:1139px;top:441px;width:1px;height:22px;background:#d9d9d9"></div>
<div class="a" style="left:1257px;top:441px;width:1px;height:22px;background:#d9d9d9"></div>
<svg class="a" style="left:651px;top:444px" width="16" height="16" viewBox="0 0 16 16"><rect x="0.65" y="3.55" width="14.7" height="11.7" fill="#fff" stroke="#1f4e89" stroke-width="1.3"/><rect x="5.2" y="0" width="5.9" height="2.2" fill="#555"/><rect x="3.1" y="2" width="10" height="2.2" fill="#555"/><rect x="2.6" y="5.6" width="2.9" height="2.6" fill="none" stroke="#1f4e89" stroke-width="1.2"/><rect x="2.6" y="10.7" width="2.9" height="2.6" fill="none" stroke="#1f4e89" stroke-width="1.2"/><path d="M7.2 6.4H13.8M7.2 8.5H12M7.2 11.2H13.8M7.2 13.3H12" stroke="#2a5d9a" stroke-width="1.1"/></svg>
<div class="t" style="left:679.30px;top:446.00px;font-size:13.5px;color:#111;letter-spacing:-0.148px">Schedule CI_Tests</div>
<div class="t" style="left:923.00px;top:446.00px;font-size:13.5px;color:#111;letter-spacing:-0.474px">01:00</div>
<svg class="a" style="left:1015px;top:444px" width="16" height="16" viewBox="0 0 16 16"><circle cx="8" cy="8" r="7.2" fill="#fff"/><path d="M8 8V0.8A7.2 7.2 0 0 1 11.04 14.53Z" fill="#3b7ac2"/><circle cx="8" cy="8" r="7.2" fill="none" stroke="#134c8c" stroke-width="1.4"/><circle cx="8" cy="8" r="2.4" fill="#fff" stroke="#134c8c" stroke-width="1.5"/><path d="M8 0.8V5.6" stroke="#134c8c" stroke-width="1.7"/></svg>
<div class="t" style="left:1037.50px;top:446.00px;font-size:13.5px;color:#111;letter-spacing:-0.213px">In Progress</div>
<div class="t" style="left:1144.60px;top:446.00px;font-size:13.5px;color:#111;letter-spacing:-0.391px">Jonas Jones</div>
<div class="t" style="left:1262.60px;top:446.00px;font-size:13.5px;color:#111;letter-spacing:-0.289px">High</div>
<div class="a" style="left:674px;top:462px;width:673px;height:22px;border:1px solid #d9d9d9;border-right:none"></div>
<div class="a" style="left:918px;top:462px;width:1px;height:22px;background:#d9d9d9"></div>
<div class="a" style="left:1012px;top:462px;width:1px;height:22px;background:#d9d9d9"></div>
<div class="a" style="left:1139px;top:462px;width:1px;height:22px;background:#d9d9d9"></div>
<div class="a" style="left:1257px;top:462px;width:1px;height:22px;background:#d9d9d9"></div>
<svg class="a" style="left:651px;top:465px" width="16" height="16" viewBox="0 0 16 16"><rect x="0.65" y="3.55" width="14.7" height="11.7" fill="#fff" stroke="#1f4e89" stroke-width="1.3"/><rect x="5.2" y="0" width="5.9" height="2.2" fill="#555"/><rect x="3.1" y="2" width="10" height="2.2" fill="#555"/><rect x="2.6" y="5.6" width="2.9" height="2.6" fill="none" stroke="#1f4e89" stroke-width="1.2"/><rect x="2.6" y="10.7" width="2.9" height="2.6" fill="none" stroke="#1f4e89" stroke-width="1.2"/><path d="M7.2 6.4H13.8M7.2 8.5H12M7.2 11.2H13.8M7.2 13.3H12" stroke="#2a5d9a" stroke-width="1.1"/></svg>
<div class="t" style="left:679.30px;top:467.00px;font-size:13.5px;color:#111;letter-spacing:0.120px">Send out TestReport</div>
<div class="t" style="left:923.00px;top:467.00px;font-size:13.5px;color:#111;letter-spacing:-0.474px">01:45</div>
<svg class="a" style="left:1015px;top:465px" width="16" height="16" viewBox="0 0 16 16"><circle cx="8" cy="8" r="7.2" fill="#fff" stroke="#134c8c" stroke-width="1.4"/><circle cx="8" cy="8" r="2.4" fill="#fff" stroke="#134c8c" stroke-width="1.5"/><path d="M8 0.8V5.6" stroke="#134c8c" stroke-width="1.7"/></svg>
<div class="t" style="left:1037.50px;top:467.00px;font-size:13.5px;color:#111;letter-spacing:0.109px">Planned</div>
<div class="t" style="left:1144.60px;top:467.00px;font-size:13.5px;color:#111;letter-spacing:-0.255px">Dusan Scott</div>
<div class="t" style="left:1262.60px;top:467.00px;font-size:13.5px;color:#111;letter-spacing:0.617px">Medium</div>
<div class="a" style="left:674px;top:483px;width:673px;height:22px;border:1px solid #d9d9d9;border-right:none"></div>
<div class="a" style="left:918px;top:483px;width:1px;height:22px;background:#d9d9d9"></div>
<div class="a" style="left:1012px;top:483px;width:1px;height:22px;background:#d9d9d9"></div>
<div class="a" style="left:1139px;top:483px;width:1px;height:22px;background:#d9d9d9"></div>
<div class="a" style="left:1257px;top:483px;width:1px;height:22px;background:#d9d9d9"></div>
<svg class="a" style="left:651px;top:486px" width="16" height="16" viewBox="0 0 16 16"><rect x="0.65" y="3.55" width="14.7" height="11.7" fill="#fff" stroke="#1f4e89" stroke-width="1.3"/><rect x="5.2" y="0" width="5.9" height="2.2" fill="#555"/><rect x="3.1" y="2" width="10" height="2.2" fill="#555"/><rect x="2.6" y="5.6" width="2.9" height="2.6" fill="none" stroke="#1f4e89" stroke-width="1.2"/><rect x="2.6" y="10.7" width="2.9" height="2.6" fill="none" stroke="#1f4e89" stroke-width="1.2"/><path d="M7.2 6.4H13.8M7.2 8.5H12M7.2 11.2H13.8M7.2 13.3H12" stroke="#2a5d9a" stroke-width="1.1"/></svg>
<div class="t" style="left:679.30px;top:488.00px;font-size:13.5px;color:#111;letter-spacing:-0.015px">Test Responsiveness</div>
<div class="t" style="left:923.00px;top:488.00px;font-size:13.5px;color:#111;letter-spacing:-0.474px">02:00</div>
<svg class="a" style="left:1015px;top:486px" width="16" height="16" viewBox="0 0 16 16"><circle cx="8" cy="8" r="7.25" fill="#3b7ac2" stroke="#134c8c" stroke-width="1.3"/><circle cx="8" cy="8" r="2.3" fill="#fff" stroke="#134c8c" stroke-width="1.4"/><path d="M8 0.8V5.7" stroke="#134c8c" stroke-width="1.6"/></svg>
<div class="t" style="left:1037.50px;top:488.00px;font-size:13.5px;color:#111;letter-spacing:0.250px">Completed</div>
<div class="t" style="left:1144.60px;top:488.00px;font-size:13.5px;color:#111;letter-spacing:-0.391px">Jonas Jones</div>
<div class="t" style="left:1262.60px;top:488.00px;font-size:13.5px;color:#111;letter-spacing:-0.289px">High</div>
<div class="a" style="left:674px;top:504px;width:673px;height:22px;border:1px solid #d9d9d9;border-right:none"></div>
<div class="a" style="left:918px;top:504px;width:1px;height:22px;background:#d9d9d9"></div>
<div class="a" style="left:1012px;top:504px;width:1px;height:22px;background:#d9d9d9"></div>
<div class="a" style="left:1139px;top:504px;width:1px;height:22px;background:#d9d9d9"></div>
<div class="a" style="left:1257px;top:504px;width:1px;height:22px;background:#d9d9d9"></div>
<svg class="a" style="left:651px;top:507px" width="16" height="16" viewBox="0 0 16 16"><rect x="0.65" y="3.55" width="14.7" height="11.7" fill="#fff" stroke="#1f4e89" stroke-width="1.3"/><rect x="5.2" y="0" width="5.9" height="2.2" fill="#555"/><rect x="3.1" y="2" width="10" height="2.2" fill="#555"/><rect x="2.6" y="5.6" width="2.9" height="2.6" fill="none" stroke="#1f4e89" stroke-width="1.2"/><rect x="2.6" y="10.7" width="2.9" height="2.6" fill="none" stroke="#1f4e89" stroke-width="1.2"/><path d="M7.2 6.4H13.8M7.2 8.5H12M7.2 11.2H13.8M7.2 13.3H12" stroke="#2a5d9a" stroke-width="1.1"/></svg>
<div class="t" style="left:679.30px;top:509.00px;font-size:13.5px;color:#111;letter-spacing:0.051px">TestPlanning Task</div>
<div class="t" style="left:923.00px;top:509.00px;font-size:13.5px;color:#111;letter-spacing:-0.474px">02:30</div>
<svg class="a" style="left:1015px;top:507px" width="16" height="16" viewBox="0 0 16 16"><circle cx="8" cy="8" r="7.25" fill="#3b7ac2" stroke="#134c8c" stroke-width="1.3"/><circle cx="8" cy="8" r="2.3" fill="#fff" stroke="#134c8c" stroke-width="1.4"/><path d="M8 0.8V5.7" stroke="#134c8c" stroke-width="1.6"/></svg>
<div class="t" style="left:1037.50px;top:509.00px;font-size:13.5px;color:#111;letter-spacing:0.250px">Completed</div>
<div class="t" style="left:1144.60px;top:509.00px;font-size:13.5px;color:#111;letter-spacing:-0.391px">Jonas Jones</div>
<div class="t" style="left:1262.60px;top:509.00px;font-size:13.5px;color:#111;letter-spacing:0.617px">Medium</div>
<div class="a" style="left:674px;top:525px;width:673px;height:22px;border:1px solid #d9d9d9;border-right:none"></div>
<div class="a" style="left:918px;top:525px;width:1px;height:22px;background:#d9d9d9"></div>
<div class="a" style="left:1012px;top:525px;width:1px;height:22px;background:#d9d9d9"></div>
<div class="a" style="left:1139px;top:525px;width:1px;height:22px;background:#d9d9d9"></div>
<div class="a" style="left:1257px;top:525px;width:1px;height:22px;background:#d9d9d9"></div>
<svg class="a" style="left:651px;top:528px" width="16" height="16" viewBox="0 0 16 16"><rect x="0.65" y="3.55" width="14.7" height="11.7" fill="#fff" stroke="#1f4e89" stroke-width="1.3"/><rect x="5.2" y="0" width="5.9" height="2.2" fill="#555"/><rect x="3.1" y="2" width="10" height="2.2" fill="#555"/><rect x="2.6" y="5.6" width="2.9" height="2.6" fill="none" stroke="#1f4e89" stroke-width="1.2"/><rect x="2.6" y="10.7" width="2.9" height="2.6" fill="none" stroke="#1f4e89" stroke-width="1.2"/><path d="M7.2 6.4H13.8M7.2 8.5H12M7.2 11.2H13.8M7.2 13.3H12" stroke="#2a5d9a" stroke-width="1.1"/></svg>
<div class="t" style="left:679.30px;top:530.00px;font-size:13.5px;color:#111;letter-spacing:-0.047px">Update TestCaseDesign</div>
<div class="t" style="left:923.00px;top:530.00px;font-size:13.5px;color:#111;letter-spacing:-0.474px">01:15</div>
<svg class="a" style="left:1015px;top:528px" width="16" height="16" viewBox="0 0 16 16"><circle cx="8" cy="8" r="7.25" fill="#3b7ac2" stroke="#134c8c" stroke-width="1.3"/><circle cx="8" cy="8" r="2.3" fill="#fff" stroke="#134c8c" stroke-width="1.4"/><path d="M8 0.8V5.7" stroke="#134c8c" stroke-width="1.6"/></svg>
<div class="t" style="left:1037.50px;top:530.00px;font-size:13.5px;color:#111;letter-spacing:0.250px">Completed</div>
<div class="t" style="left:1144.60px;top:530.00px;font-size:13.5px;color:#111;letter-spacing:0.056px">Marie Stokes</div>
<div class="t" style="left:1262.60px;top:530.00px;font-size:13.5px;color:#111;letter-spacing:0.617px">Medium</div>
<svg class="a" style="left:640px;top:532px" width="4" height="8" viewBox="0 0 4 8"><path d="M0 0L4 4L0 8Z" fill="#6e6e6e"/></svg>
<div class="a" style="left:562px;top:143px;width:390px;height:268px;background:#fff;border:1px solid #9a9a9a;box-shadow:2px 3px 4px rgba(0,0,0,0.11)"></div>
<div class="a" style="left:562px;top:143px;width:390px;height:2px;background:#a4a4a4"></div>
<div class="t" style="left:620.00px;top:162.00px;font-size:12px;color:#333;letter-spacing:-0.221px">Thursday, October 25, 2018</div>
<svg class="a" style="left:576px;top:188px" width="14" height="14" viewBox="0 0 14 14"><circle cx="7" cy="7" r="6.2" fill="#f6f6f6" stroke="#8a8a8a" stroke-width="0.9"/><path d="M10 7H4M6.8 4.2L4 7L6.8 9.8" stroke="#333" stroke-width="1.1" fill="none"/></svg>
<svg class="a" style="left:795px;top:188px" width="14" height="14" viewBox="0 0 14 14"><circle cx="7" cy="7" r="6.2" fill="#f6f6f6" stroke="#8a8a8a" stroke-width="0.9"/><path d="M4 7H10M7.2 4.2L10 7L7.2 9.8" stroke="#333" stroke-width="1.1" fill="none"/></svg>
<div class="t" style="left:651.00px;top:189.10px;font-size:12px;color:#333;letter-spacing:-0.366px">December 2017</div>
<div class="t" style="left:582.01px;top:211.00px;font-size:11.5px;color:#333">SU</div>
<div class="t" style="left:614.73px;top:211.00px;font-size:11.5px;color:#333">MO</div>
<div class="t" style="left:650.33px;top:211.00px;font-size:11.5px;color:#333">TU</div>
<div class="t" style="left:682.73px;top:211.00px;font-size:11.5px;color:#333">WE</div>
<div class="t" style="left:718.33px;top:211.00px;font-size:11.5px;color:#333">TH</div>
<div class="t" style="left:752.33px;top:211.00px;font-size:11.5px;color:#333">FR</div>
<div class="t" style="left:786.33px;top:211.00px;font-size:11.5px;color:#333">SA</div>
<div class="a" style="left:675px;top:327px;width:34px;height:24px;background:#cce4f7"></div>
<div class="t" style="left:587.70px;top:237.10px;font-size:11.5px;color:#c4c4c4">26</div>
<div class="t" style="left:621.70px;top:237.10px;font-size:11.5px;color:#c4c4c4">27</div>
<div class="t" style="left:655.70px;top:237.10px;font-size:11.5px;color:#c4c4c4">28</div>
<div class="t" style="left:689.70px;top:237.10px;font-size:11.5px;color:#c4c4c4">29</div>
<div class="t" style="left:723.70px;top:237.10px;font-size:11.5px;color:#c4c4c4">30</div>
<div class="t" style="left:764.09px;top:237.10px;font-size:11.5px;color:#333">1</div>
<div class="t" style="left:798.09px;top:237.10px;font-size:11.5px;color:#c8102e">2</div>
<div class="t" style="left:594.09px;top:261.10px;font-size:11.5px;color:#c8102e">3</div>
<div class="t" style="left:628.09px;top:261.10px;font-size:11.5px;color:#333">4</div>
<div class="t" style="left:662.09px;top:261.10px;font-size:11.5px;color:#333">5</div>
<div class="t" style="left:696.09px;top:261.10px;font-size:11.5px;color:#333">6</div>
<div class="t" style="left:730.09px;top:261.10px;font-size:11.5px;color:#333">7</div>
<div class="t" style="left:764.09px;top:261.10px;font-size:11.5px;color:#333">8</div>
<div class="t" style="left:798.09px;top:261.10px;font-size:11.5px;color:#c8102e">9</div>
<div class="t" style="left:587.70px;top:285.10px;font-size:11.5px;color:#c8102e">10</div>
<div class="t" style="left:622.55px;top:285.10px;font-size:11.5px;color:#333">11</div>
<div class="t" style="left:655.70px;top:285.10px;font-size:11.5px;color:#333">12</div>
<div class="t" style="left:689.70px;top:285.10px;font-size:11.5px;color:#333">13</div>
<div class="t" style="left:723.70px;top:285.10px;font-size:11.5px;color:#333">14</div>
<div class="t" style="left:757.70px;top:285.10px;font-size:11.5px;color:#333">15</div>
<div class="t" style="left:791.70px;top:285.10px;font-size:11.5px;color:#c8102e">16</div>
<div class="t" style="left:587.70px;top:309.10px;font-size:11.5px;color:#c8102e">17</div>
<div class="t" style="left:621.70px;top:309.10px;font-size:11.5px;color:#333">18</div>
<div class="t" style="left:655.70px;top:309.10px;font-size:11.5px;color:#333">19</div>
<div class="t" style="left:689.70px;top:309.10px;font-size:11.5px;color:#333">20</div>
<div class="t" style="left:723.70px;top:309.10px;font-size:11.5px;color:#333">21</div>
<div class="t" style="left:757.70px;top:309.10px;font-size:11.5px;color:#333">22</div>
<div class="t" style="left:791.70px;top:309.10px;font-size:11.5px;color:#c8102e">23</div>
<div class="t" style="left:587.70px;top:333.10px;font-size:11.5px;color:#c8102e">24</div>
<div class="t" style="left:621.70px;top:333.10px;font-size:11.5px;color:#333">25</div>
<div class="t" style="left:655.70px;top:333.10px;font-size:11.5px;color:#333">26</div>
<div class="t" style="left:689.70px;top:333.10px;font-size:11.5px;color:#333">27</div>
<div class="t" style="left:723.70px;top:333.10px;font-size:11.5px;color:#333">28</div>
<div class="t" style="left:757.70px;top:333.10px;font-size:11.5px;color:#333">29</div>
<div class="t" style="left:791.70px;top:333.10px;font-size:11.5px;color:#c8102e">30</div>
<div class="t" style="left:587.70px;top:357.10px;font-size:11.5px;color:#c8102e">31</div>
<div class="t" style="left:628.09px;top:357.10px;font-size:11.5px;color:#c4c4c4">1</div>
<div class="t" style="left:662.09px;top:357.10px;font-size:11.5px;color:#c4c4c4">2</div>
<div class="t" style="left:696.09px;top:357.10px;font-size:11.5px;color:#c4c4c4">3</div>
<div class="t" style="left:730.09px;top:357.10px;font-size:11.5px;color:#c4c4c4">4</div>
<div class="t" style="left:764.09px;top:357.10px;font-size:11.5px;color:#c4c4c4">5</div>
<div class="t" style="left:798.09px;top:357.10px;font-size:11.5px;color:#c4c4c4">6</div>
<div class="a" style="left:637px;top:380px;width:50px;height:20px;background:linear-gradient(#f0f0f0,#e4e4e4);border:1px solid #adadad"></div>
<div class="t" style="left:654.15px;top:383.70px;font-size:11.5px;color:#333;letter-spacing:-0.925px">OK</div>
<div class="a" style="left:697px;top:380px;width:50px;height:20px;background:linear-gradient(#f0f0f0,#e4e4e4);border:1px solid #adadad"></div>
<div class="t" style="left:704.35px;top:383.70px;font-size:11.5px;color:#333;letter-spacing:-0.103px">Cancel</div>
<svg class="a" style="left:813.4px;top:230px" width="126" height="126" viewBox="-63 -63 126 126"><circle cx="0" cy="0" r="60" fill="#f4f4f4" stroke="#a6a6a6" stroke-width="4"/><line x1="0.00" y1="-46.20" x2="0.00" y2="-53.80" stroke="#9c9c9c" stroke-width="1.9"/><line x1="5.33" y1="-50.72" x2="5.62" y2="-53.51" stroke="#9c9c9c" stroke-width="1.9"/><line x1="10.60" y1="-49.89" x2="11.19" y2="-52.62" stroke="#9c9c9c" stroke-width="1.9"/><line x1="15.76" y1="-48.50" x2="16.63" y2="-51.17" stroke="#9c9c9c" stroke-width="1.9"/><line x1="20.74" y1="-46.59" x2="21.88" y2="-49.15" stroke="#9c9c9c" stroke-width="1.9"/><line x1="23.10" y1="-40.01" x2="26.90" y2="-46.59" stroke="#9c9c9c" stroke-width="1.9"/><line x1="29.98" y1="-41.26" x2="31.62" y2="-43.53" stroke="#9c9c9c" stroke-width="1.9"/><line x1="34.13" y1="-37.90" x2="36.00" y2="-39.98" stroke="#9c9c9c" stroke-width="1.9"/><line x1="37.90" y1="-34.13" x2="39.98" y2="-36.00" stroke="#9c9c9c" stroke-width="1.9"/><line x1="41.26" y1="-29.98" x2="43.53" y2="-31.62" stroke="#9c9c9c" stroke-width="1.9"/><line x1="40.01" y1="-23.10" x2="46.59" y2="-26.90" stroke="#9c9c9c" stroke-width="1.9"/><line x1="46.59" y1="-20.74" x2="49.15" y2="-21.88" stroke="#9c9c9c" stroke-width="1.9"/><line x1="48.50" y1="-15.76" x2="51.17" y2="-16.63" stroke="#9c9c9c" stroke-width="1.9"/><line x1="49.89" y1="-10.60" x2="52.62" y2="-11.19" stroke="#9c9c9c" stroke-width="1.9"/><line x1="50.72" y1="-5.33" x2="53.51" y2="-5.62" stroke="#9c9c9c" stroke-width="1.9"/><line x1="46.20" y1="-0.00" x2="53.80" y2="-0.00" stroke="#9c9c9c" stroke-width="1.9"/><line x1="50.72" y1="5.33" x2="53.51" y2="5.62" stroke="#9c9c9c" stroke-width="1.9"/><line x1="49.89" y1="10.60" x2="52.62" y2="11.19" stroke="#9c9c9c" stroke-width="1.9"/><line x1="48.50" y1="15.76" x2="51.17" y2="16.63" stroke="#9c9c9c" stroke-width="1.9"/><line x1="46.59" y1="20.74" x2="49.15" y2="21.88" stroke="#9c9c9c" stroke-width="1.9"/><line x1="40.01" y1="23.10" x2="46.59" y2="26.90" stroke="#9c9c9c" stroke-width="1.9"/><line x1="41.26" y1="29.98" x2="43.53" y2="31.62" stroke="#9c9c9c" stroke-width="1.9"/><line x1="37.90" y1="34.13" x2="39.98" y2="36.00" stroke="#9c9c9c" stroke-width="1.9"/><line x1="34.13" y1="37.90" x2="36.00" y2="39.98" stroke="#9c9c9c" stroke-width="1.9"/><line x1="29.98" y1="41.26" x2="31.62" y2="43.53" stroke="#9c9c9c" stroke-width="1.9"/><line x1="23.10" y1="40.01" x2="26.90" y2="46.59" stroke="#9c9c9c" stroke-width="1.9"/><line x1="20.74" y1="46.59" x2="21.88" y2="49.15" stroke="#9c9c9c" stroke-width="1.9"/><line x1="15.76" y1="48.50" x2="16.63" y2="51.17" stroke="#9c9c9c" stroke-width="1.9"/><line x1="10.60" y1="49.89" x2="11.19" y2="52.62" stroke="#9c9c9c" stroke-width="1.9"/><line x1="5.33" y1="50.72" x2="5.62" y2="53.51" stroke="#9c9c9c" stroke-width="1.9"/><line x1="0.00" y1="46.20" x2="0.00" y2="53.80" stroke="#9c9c9c" stroke-width="1.9"/><line x1="-5.33" y1="50.72" x2="-5.62" y2="53.51" stroke="#9c9c9c" stroke-width="1.9"/><line x1="-10.60" y1="49.89" x2="-11.19" y2="52.62" stroke="#9c9c9c" stroke-width="1.9"/><line x1="-15.76" y1="48.50" x2="-16.63" y2="51.17" stroke="#9c9c9c" stroke-width="1.9"/><line x1="-20.74" y1="46.59" x2="-21.88" y2="49.15" stroke="#9c9c9c" stroke-width="1.9"/><line x1="-23.10" y1="40.01" x2="-26.90" y2="46.59" stroke="#9c9c9c" stroke-width="1.9"/><line x1="-29.98" y1="41.26" x2="-31.62" y2="43.53" stroke="#9c9c9c" stroke-width="1.9"/><line x1="-34.13" y1="37.90" x2="-36.00" y2="39.98" stroke="#9c9c9c" stroke-width="1.9"/><line x1="-37.90" y1="34.13" x2="-39.98" y2="36.00" stroke="#9c9c9c" stroke-width="1.9"/><line x1="-41.26" y1="29.98" x2="-43.53" y2="31.62" stroke="#9c9c9c" stroke-width="1.9"/><line x1="-40.01" y1="23.10" x2="-46.59" y2="26.90" stroke="#9c9c9c" stroke-width="1.9"/><line x1="-46.59" y1="20.74" x2="-49.15" y2="21.88" stroke="#9c9c9c" stroke-width="1.9"/><line x1="-48.50" y1="15.76" x2="-51.17" y2="16.63" stroke="#9c9c9c" stroke-width="1.9"/><line x1="-49.89" y1="10.60" x2="-52.62" y2="11.19" stroke="#9c9c9c" stroke-width="1.9"/><line x1="-50.72" y1="5.33" x2="-53.51" y2="5.62" stroke="#9c9c9c" stroke-width="1.9"/><line x1="-46.20" y1="0.00" x2="-53.80" y2="0.00" stroke="#9c9c9c" stroke-width="1.9"/><line x1="-50.72" y1="-5.33" x2="-53.51" y2="-5.62" stroke="#9c9c9c" stroke-width="1.9"/><line x1="-49.89" y1="-10.60" x2="-52.62" y2="-11.19" stroke="#9c9c9c" stroke-width="1.9"/><line x1="-48.50" y1="-15.76" x2="-51.17" y2="-16.63" stroke="#9c9c9c" stroke-width="1.9"/><line x1="-46.59" y1="-20.74" x2="-49.15" y2="-21.88" stroke="#9c9c9c" stroke-width="1.9"/><line x1="-40.01" y1="-23.10" x2="-46.59" y2="-26.90" stroke="#9c9c9c" stroke-width="1.9"/><line x1="-41.26" y1="-29.98" x2="-43.53" y2="-31.62" stroke="#9c9c9c" stroke-width="1.9"/><line x1="-37.90" y1="-34.13" x2="-39.98" y2="-36.00" stroke="#9c9c9c" stroke-width="1.9"/><line x1="-34.13" y1="-37.90" x2="-36.00" y2="-39.98" stroke="#9c9c9c" stroke-width="1.9"/><line x1="-29.98" y1="-41.26" x2="-31.62" y2="-43.53" stroke="#9c9c9c" stroke-width="1.9"/><line x1="-23.10" y1="-40.01" x2="-26.90" y2="-46.59" stroke="#9c9c9c" stroke-width="1.9"/><line x1="-20.74" y1="-46.59" x2="-21.88" y2="-49.15" stroke="#9c9c9c" stroke-width="1.9"/><line x1="-15.76" y1="-48.50" x2="-16.63" y2="-51.17" stroke="#9c9c9c" stroke-width="1.9"/><line x1="-10.60" y1="-49.89" x2="-11.19" y2="-52.62" stroke="#9c9c9c" stroke-width="1.9"/><line x1="-5.33" y1="-50.72" x2="-5.62" y2="-53.51" stroke="#9c9c9c" stroke-width="1.9"/><line x1="0" y1="0" x2="-32" y2="2" stroke="#454545" stroke-width="2" stroke-linecap="round"/><line x1="0" y1="0" x2="-23.5" y2="-39" stroke="#454545" stroke-width="2" stroke-linecap="round"/><line x1="6" y1="7" x2="-31.5" y2="-35" stroke="#555" stroke-width="0.9"/></svg>
<div class="a" style="left:826px;top:379px;width:100px;height:22px;background:#fff;border:1px solid #ababab"></div>
<div class="a" style="left:909px;top:380px;width:16px;height:20px;background:linear-gradient(#f3f3f3 0,#ececec 50%,#e6e6e6 50%,#e3e3e3 100%);border-left:1px solid #c4c4c4"></div>
<svg class="a" style="left:914px;top:382.5px" width="7" height="16" viewBox="0 0 7 16"><path d="M0.8 4.8L3.5 1.5L6.2 4.8M0.8 11L3.5 14.3L6.2 11" stroke="#777" stroke-width="2" fill="none"/></svg>
<div class="t" style="left:830.00px;top:385.00px;font-size:11.5px;color:#333;letter-spacing:-0.470px">08:54</div>
</body></html>
